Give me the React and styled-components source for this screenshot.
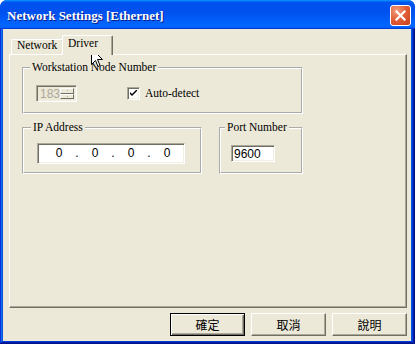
import React from "react";
import styled, { createGlobalStyle } from "styled-components";

const Global = createGlobalStyle`
  html, body { margin: 0; padding: 0; background: #ffffff; }
  body { font-family: "Liberation Serif", serif; }
`;

const Window = styled.div`
  position: relative;
  width: 415px;
  height: 344px;
  display: flex;
  flex-direction: column;
  border-radius: 7px 7px 0 0;
  overflow: hidden;
  background: #0855dd;
`;

const TitleBar = styled.div`
  height: 29px;
  flex: none;
  display: flex;
  align-items: center;
  justify-content: space-between;
  padding: 0 4px 0 7px;
  box-sizing: border-box;
  background: linear-gradient(180deg, #0997ff, #0053ee 8%, #0050ee 40%, #06f 88%, #06f 93%, #005bff 95%, #003dd7 96%, #003dd7);
`;

const Title = styled.span`
  color: #fff;
  font: 700 13px/15px "Liberation Serif", serif;
  text-shadow: 1px 1px #0a1883;
  padding-top: 1px;
`;

const CloseButton = styled.div`
  width: 21px;
  height: 21px;
  box-sizing: border-box;
  border: 1px solid #fff;
  border-radius: 3px;
  background: radial-gradient(circle at 30% 25%, #f39c80 0%, #e2613a 45%, #c83d1c 100%);
  display: flex;
  align-items: center;
  justify-content: center;
  margin-top: 2px;
`;

const Frame = styled.div`
  flex: 1;
  display: flex;
  padding: 0 4px 3px 3px;
  box-shadow: inset -1px -1px #00138c, inset 1px 0 #0831d9, inset -2px -2px #001ea0, inset 2px 0 #166aee, inset -3px -3px #003bda;
`;

const Client = styled.div`
  flex: 1;
  background: #ece9d8;
  display: flex;
  flex-direction: column;
  padding: 6px 4px 5px 6px;
`;

const TabStrip = styled.div`
  height: 19px;
  display: flex;
  align-items: flex-end;
  padding-left: 2px;
`;

const Tab = styled.div`
  box-sizing: border-box;
  height: ${(p) => (p.$active ? 20 : 15)}px;
  width: ${(p) => (p.$active ? 51 : 53)}px;
  margin-right: ${(p) => (p.$active ? 0 : -2)}px;
  margin-bottom: ${(p) => (p.$active ? -1 : 0)}px;
  position: relative;
  z-index: ${(p) => (p.$active ? 1 : 0)};
  background: #ece9d8;
  border-left: 1px solid #fff;
  border-top: 1px solid #fff;
  border-right: 1px solid #716f64;
  box-shadow: inset -1px 0 #aca899;
  border-radius: 2px 2px 0 0;
  padding: ${(p) => (p.$active ? "2px 0 0 5px" : "0 0 0 5px")};
  font: 11.5px/11px "Liberation Serif", serif;
  color: #000;
`;

const Panel = styled.div`
  box-sizing: border-box;
  height: 254px;
  border: 1px solid;
  border-color: #fff #716f64 #716f64 #fff;
  box-shadow: inset -1px -1px #aca899;
  padding: 6px 0 0 12px;
  display: flex;
  flex-direction: column;
  gap: 7px;
`;

const Group = styled.fieldset`
  margin: 0;
  box-sizing: border-box;
  min-inline-size: 0;
  width: ${(p) => p.$w}px;
  border: 2px groove #fff;
  padding: ${(p) => p.$pad};
  display: flex;
  align-items: ${(p) => p.$align || "flex-start"};
`;

const Legend = styled.legend`
  padding: 0 2px 2px 2px;
  margin-left: -6px;
  font: 11.5px/12px "Liberation Serif", serif;
  color: #000;
`;

const Row = styled.div`
  display: flex;
  gap: 17px;
  align-items: stretch;
`;

const Spin = styled.div`
  box-sizing: border-box;
  width: 41px;
  height: 17px;
  display: flex;
  border: 1px solid;
  border-color: #aca899 #fff #fff #aca899;
  box-shadow: inset 1px 1px #716f64, inset -1px -1px #f1efe2;
  padding: 2px;
  background: #ece9d8;
`;

const SpinValue = styled.span`
  flex: 1;
  color: #aca899;
  font: 12px/13px "Liberation Sans", sans-serif;
  padding-left: 1px;
`;

const SpinButtons = styled.div`
  width: 16px;
  display: flex;
  flex-direction: column;
`;

const SpinBtn = styled.div`
  flex: 1;
  box-sizing: border-box;
  border: 1px solid;
  border-color: #fff #716f64 #716f64 #fff;
  background: #ece9d8;
  display: flex;
  align-items: center;
  justify-content: center;
  &::after {
    content: "";
    width: 1px;
    height: 1px;
    background: #aca899;
  }
`;

const CheckLabel = styled.label`
  display: flex;
  align-items: center;
  gap: 5px;
  margin-left: 50px;
  font: 11.5px/13px "Liberation Serif", serif;
  color: #000;
`;

const CheckBox = styled.span`
  box-sizing: border-box;
  width: 13px;
  height: 13px;
  border: 1px solid;
  border-color: #aca899 #fff #fff #aca899;
  box-shadow: inset 1px 1px #716f64, inset -1px -1px #f1efe2;
  background: #fff;
  display: flex;
  align-items: center;
  justify-content: center;
`;

const Field = styled.div`
  box-sizing: border-box;
  width: ${(p) => p.$w}px;
  height: ${(p) => p.$h}px;
  margin-top: ${(p) => p.$mt || 0}px;
  background: #fff;
  border: 1px solid;
  border-color: #aca899 #fff #fff #aca899;
  box-shadow: inset 1px 1px #716f64, inset -1px -1px #f1efe2;
  font: 12px/13px "Liberation Sans", sans-serif;
  color: #000;
`;

const IpField = styled(Field)`
  display: grid;
  grid-template-columns: 28px 8px 28px 8px 28px 8px 28px;
  align-items: center;
  justify-items: center;
  padding-left: 7px;
`;

const PortField = styled(Field)`
  padding: 2px 0 0 2px;
`;

const ButtonRow = styled.div`
  display: flex;
  justify-content: flex-end;
  gap: 6px;
  margin-top: 5px;
`;

const Button = styled.button`
  box-sizing: border-box;
  width: 75px;
  height: 23px;
  padding: 0;
  margin: 0;
  background: #ece9d8;
  font: 12px/14px "Noto Sans CJK TC", "Liberation Sans", sans-serif;
  color: #000;
  border: 1px solid;
  border-color: ${(p) => (p.$default ? "#000" : "#fff #716f64 #716f64 #fff")};
  box-shadow: ${(p) =>
    p.$default
      ? "inset 1px 1px #fff, inset -1px -1px #716f64, inset -2px -2px #aca899"
      : "inset -1px -1px #aca899"};
`;

const Cursor = styled.svg`
  position: absolute;
  left: 91px;
  top: 48px;
`;

export default function App() {
  return (
    <>
      <Global />
      <Window>
        <TitleBar>
          <Title>Network Settings [Ethernet]</Title>
          <CloseButton>
            <svg width="11" height="11" viewBox="0 0 11 11">
              <path d="M1.5 1.5 L9.5 9.5 M9.5 1.5 L1.5 9.5" stroke="#fff" strokeWidth="2.2" strokeLinecap="square" />
            </svg>
          </CloseButton>
        </TitleBar>
        <Frame>
          <Client>
            <TabStrip>
              <Tab>Network</Tab>
              <Tab $active>Driver</Tab>
            </TabStrip>
            <Panel>
              <Group $w={281} $pad="10px 12px 10px 12px" $align="center">
                <Legend>Workstation Node Number</Legend>
                <Spin>
                  <SpinValue>183</SpinValue>
                  <SpinButtons>
                    <SpinBtn />
                    <SpinBtn />
                  </SpinButtons>
                </Spin>
                <CheckLabel>
                  <CheckBox>
                    <svg width="7" height="7" viewBox="0 0 7 7">
                      <path d="M0 2 L0 4 L2 6 L7 1 L7 -1 L2 4 Z" fill="#000" />
                    </svg>
                  </CheckBox>
                  Auto-detect
                </CheckLabel>
              </Group>
              <Row>
                <Group $w={180} $pad="8px 13px 8px 13px">
                  <Legend>IP Address</Legend>
                  <IpField $w={148} $h={21}>
                    <span>0</span>
                    <span>.</span>
                    <span>0</span>
                    <span>.</span>
                    <span>0</span>
                    <span>.</span>
                    <span>0</span>
                  </IpField>
                </Group>
                <Group $w={84} $pad="8px 10px 8px 10px">
                  <Legend>Port Number</Legend>
                  <PortField $w={44} $h={17} $mt={2}>9600</PortField>
                </Group>
              </Row>
            </Panel>
            <ButtonRow>
              <Button $default>確定</Button>
              <Button>取消</Button>
              <Button>說明</Button>
            </ButtonRow>
          </Client>
        </Frame>
        <Cursor width="13" height="20" viewBox="0 0 13 20">
          <path d="M0.5 0.5 L0.5 16.5 L4.5 12.5 L7 18.5 L9 17.5 L6.5 11.5 L11.5 11.5 Z" fill="#fff" stroke="#000" strokeWidth="1" />
        </Cursor>
      </Window>
    </>
  );
}
